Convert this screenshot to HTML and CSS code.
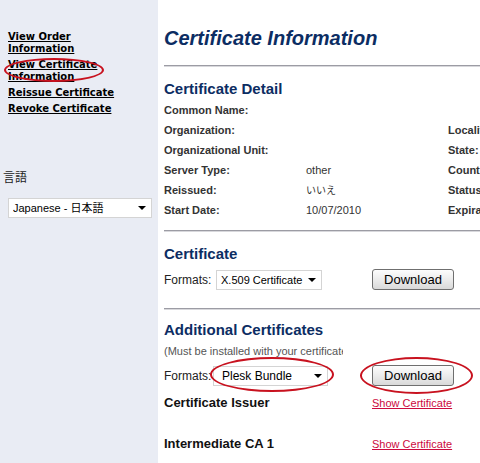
FILE: index.html
```html
<!DOCTYPE html>
<html lang="en">
<head>
    <meta charset="UTF-8">
    <title>Certificate Information</title>
    <link rel="stylesheet" href="styles.css">
</head>
<body>
    <div class="page">
        <div class="sidebar">
            <ul class="nav">
                <li><a href="#">View Order Information</a></li>
                <li><a href="#">View Certificate Information</a></li>
                <li><a href="#">Reissue Certificate</a></li>
                <li><a href="#">Revoke Certificate</a></li>
            </ul>
            <div class="lang-label">言語</div>
            <div class="select-box lang-box">
                <select class="lang-select">
                    <option>Japanese - 日本語</option>
                    <option>English</option>
                </select>
            </div>
        </div>

        <div class="main">
            <h1>Certificate Information</h1>
            <hr class="rule">

            <h2>Certificate Detail</h2>
            <table class="detail">
                <tr><th>Common Name:</th><td></td><th></th></tr>
                <tr><th>Organization:</th><td></td><th>Locality:</th></tr>
                <tr><th>Organizational Unit:</th><td></td><th>State:</th></tr>
                <tr><th>Server Type:</th><td>other</td><th>Country:</th></tr>
                <tr><th>Reissued:</th><td class="jp">いいえ</td><th>Status:</th></tr>
                <tr><th>Start Date:</th><td>10/07/2010</td><th>Expiration:</th></tr>
            </table>
            <hr class="rule">

            <h2>Certificate</h2>
            <div class="row">
                <div class="format">
                    <span class="format-label">Formats:</span>
                    <div class="select-box x509-box">
                        <select>
                            <option>X.509 Certificate</option>
                            <option>PKCS#7</option>
                        </select>
                    </div>
                </div>
                <div><button type="button" class="btn">Download</button></div>
            </div>
            <hr class="rule">

            <h2 class="extra-title">Additional Certificates</h2>
            <span class="note">(Must be installed with your certificate)</span>
            <div class="row">
                <div class="format">
                    <span class="format-label">Formats:</span>
                    <div class="select-box bundle-box">
                        <select>
                            <option>Plesk Bundle</option>
                            <option>Apache Bundle</option>
                        </select>
                    </div>
                </div>
                <div><button type="button" class="btn">Download</button></div>
            </div>

            <div class="row chain">
                <div class="chain-name">Certificate Issuer</div>
                <div><a href="#" class="show-link">Show Certificate</a></div>
            </div>
            <div class="row chain">
                <div class="chain-name">Intermediate CA 1</div>
                <div><a href="#" class="show-link">Show Certificate</a></div>
            </div>
        </div>

        <!-- red circles drawn on top -->
        <div class="mark mark-nav"></div>
        <div class="mark mark-select"></div>
        <div class="mark mark-button"></div>
    </div>
</body>
</html>
```

FILE: styles.css
```css
html, body {
    margin: 0;
    padding: 0;
    overflow: hidden;
}

body {
    font-family: "Liberation Sans", Arial, "Noto Sans CJK JP", sans-serif;
    color: #333;
    background: #fff;
}

.page {
    position: relative;
    display: flex;
    min-height: 463px;
}

/* left menu */
.sidebar {
    width: 158px;
    flex-shrink: 0;
    background-color: #e9ecf4;
}

.nav {
    list-style: none;
    margin: 0;
    padding: 31px 0 0 8px;
    width: 118px;
}

.nav li {
    font: bold 10px "DejaVu Sans", Verdana, sans-serif;
    line-height: 12px;
    margin-bottom: 4px;
}

.nav a {
    color: #000;
}

.lang-label {
    margin-top: 54px;
    padding-left: 3px;
    font: 12px "Noto Sans CJK JP", sans-serif;
    color: #222;
    line-height: 16px;
}

.lang-box {
    margin: 13px 0 0 8px;
}

.select-box {
    position: relative;
    display: inline-block;
}

.select-box select {
    -webkit-appearance: none;
    appearance: none;
    display: block;
    margin: 0;
    height: 20px;
    border: 1px solid #d4d4d4;
    border-radius: 0;
    background: #fff;
    color: #000;
    font-family: "Liberation Sans", Arial, "Noto Sans CJK JP", sans-serif;
    font-size: 11px;
    padding: 0 0 0 4px;
    outline: none;
}

.select-box::after {
    content: "";
    position: absolute;
    right: 6px;
    top: 8px;
    border-left: 4px solid transparent;
    border-right: 4px solid transparent;
    border-top: 4px solid #000;
}

.lang-select {
    width: 144px;
}

/* right content */
.main {
    width: 430px;
    flex-shrink: 0;
    padding-left: 6px;
}

h1 {
    margin: 26px 0 0;
    font-size: 20px;
    line-height: 24px;
    font-style: italic;
    font-weight: bold;
    color: #0c2d63;
}

.rule {
    margin: 15px 0 0;
    height: 0;
    border: none;
    border-top: 1px solid #9c9ca4;
    border-bottom: 1px solid #d8d8dc;
}

h2 {
    margin: 13px 0 0;
    font-size: 15px;
    line-height: 18px;
    color: #0c2d63;
}

h2.extra-title {
    margin-top: 11px;
}

.detail {
    margin-top: 2px;
    border-collapse: collapse;
    font-size: 11px;
}

.detail th,
.detail td {
    padding: 0;
    height: 20px;
    line-height: 20px;
    text-align: left;
    vertical-align: middle;
    white-space: nowrap;
}

.detail th {
    font-weight: bold;
    width: 142px;
}

.detail td {
    width: 142px;
}

.detail .jp {
    font-family: "Noto Sans CJK JP", sans-serif;
    font-size: 10px;
}

.detail + .rule {
    margin-top: 10px;
}

.row {
    display: grid;
    grid-template-columns: 208px auto;
    align-items: center;
}

.format {
    display: flex;
    align-items: center;
}

.format-label {
    font-size: 12px;
    color: #222;
    width: 52px;
}

.x509-box select {
    width: 106px;
}

.bundle-box {
    margin-left: -3px;
}

.bundle-box select {
    width: 115px;
    font-size: 12px;
    padding-left: 8px;
}

.btn {
    width: 82px;
    height: 21px;
    padding: 0;
    border: 1px solid #6f6f6f;
    border-radius: 3px;
    background: linear-gradient(#fdfdfd, #ececec 50%, #d9d9d9);
    font-family: "Liberation Sans", Arial, sans-serif;
    font-size: 13px;
    color: #000;
}

h2 + .row {
    margin-top: 6px;
}

.row + .rule {
    margin-top: 18px;
}

.note {
    display: block;
    width: 179px;
    overflow: hidden;
    white-space: nowrap;
    margin-top: 5px;
    font-size: 11px;
    line-height: 14px;
    color: #555;
}

.note + .row {
    margin-top: 7px;
}

.chain {
    margin-top: 6px;
    height: 20px;
}

.chain + .chain {
    margin-top: 21px;
}

.chain-name {
    font-size: 13px;
    font-weight: bold;
    color: #111;
}

.show-link {
    font-size: 11px;
    color: #cc0a3e;
}

/* hand-drawn red circles */
.mark {
    position: absolute;
    border: 2px solid #c8121f;
    border-radius: 50%;
    box-sizing: border-box;
}

.mark-nav {
    left: 4px;
    top: 58px;
    width: 100px;
    height: 24px;
}

.mark-select {
    left: 210px;
    top: 357px;
    width: 124px;
    height: 35px;
}

.mark-button {
    left: 360px;
    top: 357px;
    width: 113px;
    height: 37px;
}
```
